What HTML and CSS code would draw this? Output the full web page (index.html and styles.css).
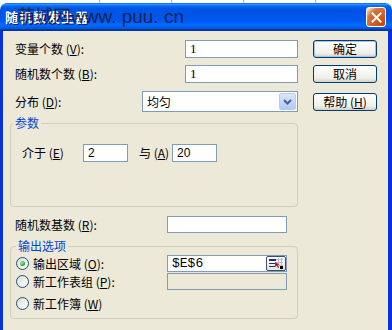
FILE: index.html
```html
<!DOCTYPE html>
<html>
<head>
<meta charset="utf-8">
<link rel="stylesheet" href="styles.css">
</head>
<body>
<div class="sheet"></div>
<div class="window">
  <div class="titlebar">
    <span class="title">随机数发生器</span>
    <span class="watermark">萌城网<span class="wm-latin">www. puu. cn</span></span>
    <span class="close">
      <svg width="11" height="11" viewBox="0 0 11 11"><path d="M1.5 1.5L9.5 9.5M9.5 1.5L1.5 9.5" stroke="#fff" stroke-width="2" stroke-linecap="square"/></svg>
    </span>
  </div>
  <div class="client">
    <div class="main">
      <div class="row r1">
        <span class="lbl">变量个数 (<u>V</u>):</span>
        <span class="input w112 serif">1</span>
      </div>
      <div class="row r2">
        <span class="lbl">随机数个数 (<u>B</u>):</span>
        <span class="input w112 serif">1</span>
      </div>
      <div class="row r3">
        <span class="lbl">分布 (<u>D</u>):</span>
        <span class="select">
          <span class="sel-text">均匀</span>
          <span class="drop">
            <svg width="9" height="6" viewBox="0 0 9 6"><path d="M1 1l3.5 3.5L8 1" stroke="#4D6185" stroke-width="2" fill="none"/></svg>
          </span>
        </span>
      </div>
      <fieldset class="group g1">
        <legend class="legend">参数</legend>
        <div class="prow">
          <span class="plbl">介于 (<u>E</u>)</span>
          <span class="input w45 sans">2</span>
          <span class="plbl2">与 (<u>A</u>)</span>
          <span class="input w45 sans">20</span>
        </div>
      </fieldset>
      <div class="row r4">
        <span class="lbl">随机数基数 (<u>R</u>):</span>
        <span class="input w120"></span>
      </div>
      <fieldset class="group g2">
        <legend class="legend">输出选项</legend>
        <div class="opt o1">
          <span class="radio on"></span>
          <span class="lbl">输出区域 (<u>O</u>):</span>
          <span class="input w120 refin">
            <span class="mono">$E$6</span>
            <span class="refbtn">
              <svg width="16" height="11" viewBox="0 0 16 11">
                <path d="M8 1.5h7M8 4.5h7M8 7.5h7M10.5 0v10M13.5 0v10" stroke="#B8BED0" stroke-width="1"/>
                <rect x="1" y="1" width="7" height="2" fill="#1D2E6E"/>
                <rect x="1" y="5" width="6" height="1" fill="#1D2E6E"/>
                <rect x="1" y="8" width="6" height="1" fill="#1D2E6E"/>
                <path d="M7 4l4.5 2.5-2 .6 1.6 2.2-1 .6-1.5-2.2L7 9z" fill="#C01818"/>
                <rect x="12" y="8" width="3" height="3" fill="#000"/>
              </svg>
            </span>
          </span>
        </div>
        <div class="opt o2">
          <span class="radio"></span>
          <span class="lbl">新工作表组 (<u>P</u>):</span>
          <span class="input w120 disabled"></span>
        </div>
        <div class="opt o3">
          <span class="radio"></span>
          <span class="lbl">新工作簿 (<u>W</u>)</span>
        </div>
      </fieldset>
    </div>
    <div class="buttons">
      <span class="btn default">确定</span>
      <span class="btn b2">取消</span>
      <span class="btn b3">帮助 (<u>H</u>)</span>
    </div>
  </div>
</div>
</body>
</html>
```
FILE: styles.css
```css
* { box-sizing: border-box; }
html, body { margin: 0; padding: 0; }
body {
  width: 392px;
  height: 330px;
  overflow: hidden;
  background: #fff;
  font-family: "Noto Sans CJK SC", "Liberation Sans", sans-serif;
  font-size: 12px;
  color: #000;
}
.sheet {
  height: 3px;
  background:
    linear-gradient(#b8b8b8, #b8b8b8) 99px 0 / 1px 100% no-repeat,
    linear-gradient(#b8b8b8, #b8b8b8) 171px 0 / 1px 100% no-repeat,
    linear-gradient(#b8b8b8, #b8b8b8) 243px 0 / 1px 100% no-repeat,
    linear-gradient(#b8b8b8, #b8b8b8) 315px 0 / 1px 100% no-repeat,
    #fff;
}
.window {
  height: 327px;
  display: flex;
  flex-direction: column;
}
.titlebar {
  position: relative;
  height: 28px;
  flex: none;
  display: flex;
  align-items: center;
  padding: 0 6px 0 5px;
  border-radius: 7px 7px 0 0;
  background: linear-gradient(to bottom, #0058EE 0%, #3593FF 4%, #288EFF 6%, #127DFF 8%, #036FFC 10%, #0262EE 14%, #0057E5 20%, #0054E3 24%, #0055EB 56%, #005BF5 66%, #026AFE 76%, #0062EF 86%, #0052D6 92%, #0040AB 94%, #003092 100%);
}
.title {
  color: #fff;
  font-weight: bold;
  font-size: 13px;
  letter-spacing: 1px;
  line-height: 16px;
  text-shadow: 1px 1px 0 #0A1E8C;
}
.watermark {
  position: absolute;
  left: 17px;
  top: 1px;
  font-size: 18px;
  line-height: 22px;
  color: rgba(20, 20, 45, 0.8);
  white-space: nowrap;
}
.wm-latin {
  font-family: "Liberation Sans", sans-serif;
  font-size: 19px;
}
.close {
  margin-left: auto;
  width: 20px;
  height: 20px;
  border: 1px solid #fff;
  border-radius: 3px;
  display: flex;
  align-items: center;
  justify-content: center;
  background: radial-gradient(circle at 90% 90%, #CC4600 0%, #DC6527 55%, #CD7546 70%, #FFCCB2 90%, #fff 100%);
}
.client {
  flex: 1;
  display: flex;
  background: #ECE9D8;
  border-left: 3px solid #0831D9;
  border-right: 4px solid #0831D9;
}
.main {
  width: 295px;
  flex: none;
  padding: 9px 0 0 7px;
  display: flex;
  flex-direction: column;
}
.row {
  flex: none;
  display: flex;
  align-items: center;
  justify-content: space-between;
  padding-left: 5px;
}
.lbl, .plbl, .plbl2 {
  line-height: 14px;
  white-space: nowrap;
}
.r1 { height: 18px; }
.r2 { height: 18px; margin-top: 7px; }
.r3 { height: 21px; margin-top: 8px; }
.r4 { height: 17px; margin-top: 9px; padding-right: 11px; }
.input {
  height: 18px;
  background: #fff;
  border: 1px solid #7F9DB9;
  padding-left: 4px;
  display: flex;
  align-items: center;
  line-height: 14px;
}
.w112 { width: 113px; }
.w120 { width: 120px; height: 17px; }
.w45 { width: 45px; }
.serif { font-family: "Liberation Serif", serif; font-size: 13px; }
.sans { font-family: "Liberation Sans", sans-serif; font-size: 12px; }
.mono { font-family: "Liberation Mono", monospace; font-size: 13px; }
.select {
  width: 156px;
  height: 21px;
  background: #fff;
  border: 1px solid #7F9DB9;
  display: flex;
  align-items: center;
  padding: 1px 1px 1px 4px;
}
.sel-text { flex: 1; line-height: 14px; }
.drop {
  width: 17px;
  height: 17px;
  border: 1px solid #B9CCF4;
  border-radius: 2px;
  background: linear-gradient(#DCE6FC, #C1D3FB 60%, #B1C7F5);
  display: flex;
  align-items: center;
  justify-content: center;
}
.group {
  margin: 4px 0 0 0;
  border: 1px solid #D0D0BF;
  border-radius: 4px;
  min-width: 0;
}
.legend {
  padding: 0 2px;
  color: #0046D5;
  font-size: 12px;
  line-height: 14px;
}
.g1 { padding: 14px 0 44px 2px; }
.prow {
  display: flex;
  align-items: center;
  height: 18px;
  padding-left: 9px;
}
.plbl { width: 61px; }
.plbl2 { width: 33px; margin-left: 11px; }
.g2 { margin-top: 6px; padding: 2px 10px 6px 5px; }
.opt {
  display: flex;
  align-items: center;
  height: 17px;
}
.o2 { margin-top: 1px; }
.o3 { margin-top: 5px; }
.opt .input { margin-left: auto; }
.radio {
  width: 13px;
  height: 13px;
  flex: none;
  border: 1px solid #1C5180;
  border-radius: 50%;
  background: linear-gradient(135deg, #DCDCD5, #fff);
  margin-right: 4px;
  display: flex;
  align-items: center;
  justify-content: center;
}
.radio.on::after {
  content: "";
  width: 5px;
  height: 5px;
  border-radius: 50%;
  background: radial-gradient(circle at 35% 35%, #A8F0A0, #21A121 70%);
}
.refin { padding-right: 0; justify-content: space-between; }
.refbtn {
  width: 20px;
  height: 15px;
  border: 1px solid #3A5070;
  border-radius: 2px;
  background: linear-gradient(#fff, #E6E3D6);
  display: flex;
  align-items: center;
  justify-content: center;
}
.disabled { background: #ECE9D8; }
.buttons {
  display: flex;
  flex-direction: column;
  margin-left: 15px;
  padding-top: 9px;
}
.btn {
  width: 64px;
  height: 18px;
  border: 1px solid #003C74;
  border-radius: 3px;
  background: linear-gradient(#fff, #F0F0EA 75%, #D6D0C5);
  display: flex;
  align-items: center;
  justify-content: center;
  line-height: 14px;
}
.btn.default { box-shadow: inset 0 0 0 1px #A8C4EE; }
.b2 { margin-top: 7px; }
.b3 { margin-top: 10px; }
```
